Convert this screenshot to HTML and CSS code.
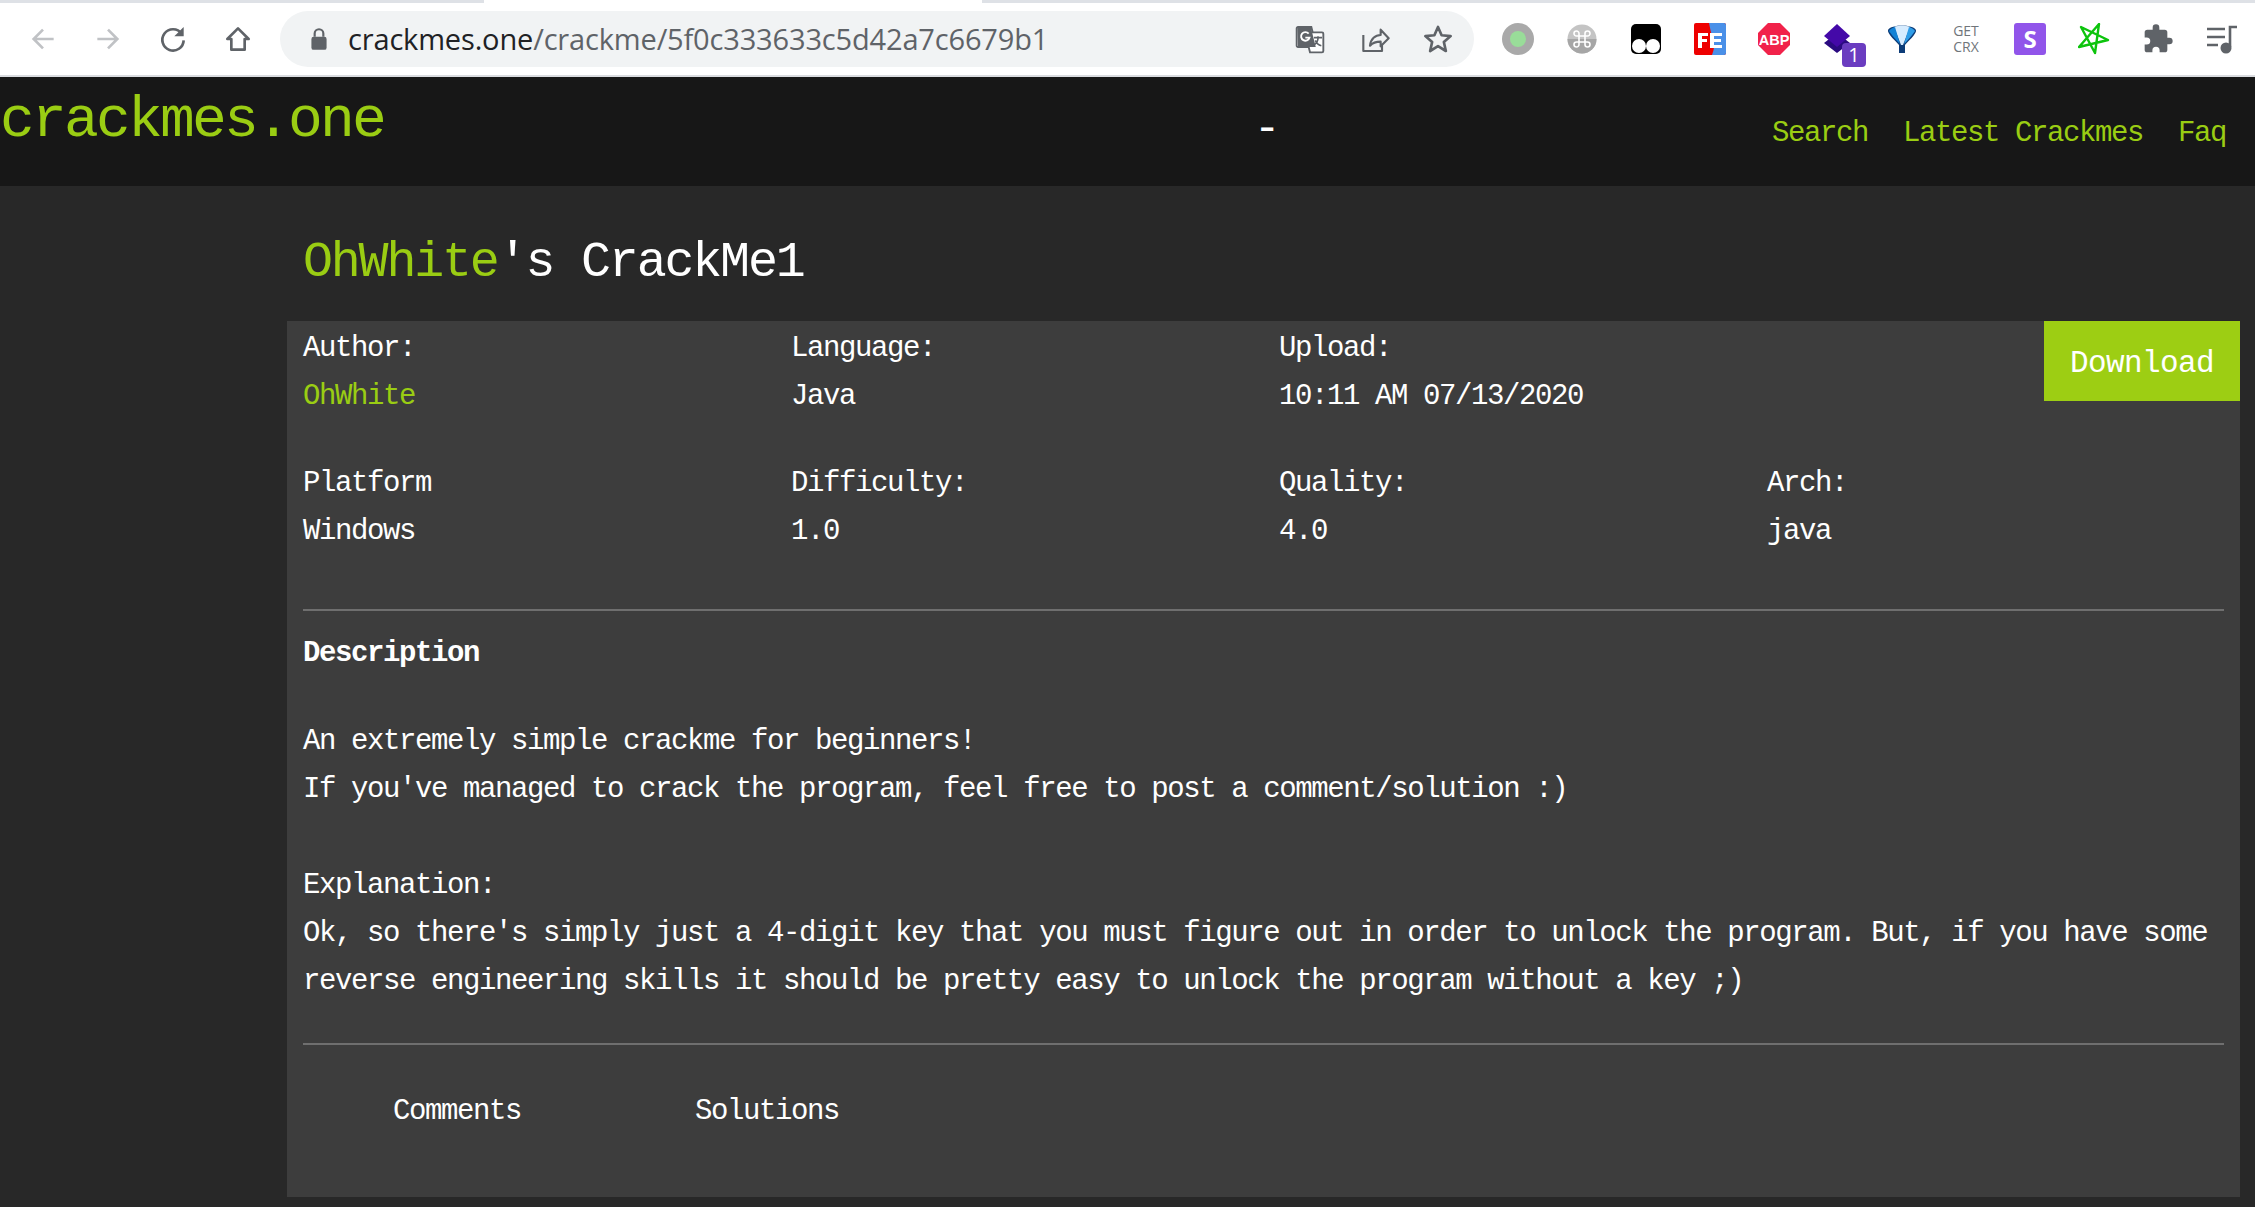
FILE: index.html
```html
<!DOCTYPE html>
<html lang="en">
<head>
    <meta charset="UTF-8">
    <title>OhWhite's CrackMe1</title>
    <link rel="stylesheet" href="styles.css">
</head>
<body>
<div class="tabstrip"><div class="tab-active"></div></div>
<div class="toolbar">
    <div class="nav-buttons">
        <svg class="tb-icon" viewBox="0 0 24 24"><path d="M20 12H5M12 5l-7 7 7 7" fill="none" stroke="#c0c2c5" stroke-width="2"/></svg>
        <svg class="tb-icon" viewBox="0 0 24 24"><path d="M4 12h15M12 5l7 7-7 7" fill="none" stroke="#c0c2c5" stroke-width="2"/></svg>
        <svg class="tb-icon" viewBox="0 0 24 24"><path d="M18.500 8A8 8 0 1 0 20 13" fill="none" stroke="#5f6368" stroke-width="2"/><path d="M20 3v7h-7z" fill="#5f6368"/></svg>
        <svg class="tb-icon" viewBox="0 0 24 24"><path d="M12 4l8 8h-3v8H7v-8H4z" fill="none" stroke="#5f6368" stroke-width="2" stroke-linejoin="round"/></svg>
    </div>
    <div class="omnibox">
        <svg class="lock" viewBox="0 0 24 24"><path d="M8 10V7a4 4 0 0 1 8 0v3" fill="none" stroke="#5f6368" stroke-width="2"/><rect x="5" y="10" width="14" height="12" rx="2" fill="#5f6368"/></svg>
        <div class="url"><span class="url-host">crackmes.one</span>/crackme/5f0c333633c5d42a7c6679b1</div>
        <div class="omni-actions">
            <svg class="tb-icon" viewBox="0 0 24 24"><path d="M3 3h10l1 4h7a1 1 0 0 1 1 1v13a1 1 0 0 1-1 1H12l-1-4H3a1 1 0 0 1-1-1V4a1 1 0 0 1 1-1z" fill="#fff" stroke="#5f6368" stroke-width="1.400"/><path d="M2.500 3.500h10.200l3.600 14.500H3z" fill="#5f6368"/><path d="M11 8a3.200 3.200 0 1 0 .6 3H8.500" fill="none" stroke="#fff" stroke-width="1.400"/><path d="M15 11h6M18 10v1.500c0 2.500-1.500 4-3 5M16 13c.8 2 2.500 3.500 4.500 4" fill="none" stroke="#5f6368" stroke-width="1.200"/></svg>
            <svg class="tb-icon" viewBox="0 0 24 24"><path d="M4 9v12h14v-5M9 17c.5-5 4-8 8-8V5l6 6.500-6 6V14c-3.500 0-6 .8-8 3z" fill="none" stroke="#5f6368" stroke-width="1.600" stroke-linejoin="round"/></svg>
            <svg class="tb-icon" viewBox="0 0 24 24"><path d="M12 3l2.700 6.200 6.800.6-5.100 4.500 1.500 6.700L12 17.400 6.100 21l1.500-6.700L2.500 9.800l6.800-.6z" fill="none" stroke="#5f6368" stroke-width="2" stroke-linejoin="round"/></svg>
        </div>
    </div>
    <div class="extensions">
        <svg class="ext" viewBox="0 0 32 32"><circle cx="16" cy="16" r="16" fill="#a9a9a9"/><circle cx="16" cy="16" r="8" fill="#99dd99"/></svg>
        <svg class="ext" viewBox="0 0 32 32"><circle cx="16" cy="16" r="14.500" fill="#c4c4c4"/><path d="M1.500 16h29A14.500 14.500 0 0 1 1.500 16z" fill="#a6a6a6"/><path d="M13 13h6v6h-6zM13 13h-2.500a2.500 2.500 0 1 1 2.500-2.500zM19 13v-2.500a2.500 2.500 0 1 1 2.500 2.500zM13 19v2.500a2.500 2.500 0 1 1-2.500-2.500zM19 19h2.500a2.500 2.500 0 1 1-2.500 2.500z" fill="none" stroke="#fff" stroke-width="1.600"/></svg>
        <svg class="ext" viewBox="0 0 32 32"><rect x="1" y="1" width="30" height="30" rx="5" fill="#000"/><circle cx="9" cy="23" r="7" fill="#fff"/><circle cx="23" cy="23" r="7" fill="#fff"/></svg>
        <svg class="ext" viewBox="0 0 32 32"><rect width="32" height="32" rx="2" fill="#ee0000"/><path d="M15 0h15a2 2 0 0 1 2 2v28a2 2 0 0 1-2 2H18c2-5 3-10 1-16s-3-11-4-16z" fill="#4a90e8"/><path d="M4 10h10v3H8v3h5v3H8v6H4zM16 10h12v3h-8v3h7v3h-7v3h8v3H16z" fill="#fff"/></svg>
        <svg class="ext" viewBox="0 0 32 32"><path d="M10 0h12l10 10v12L22 32H10L0 22V10z" fill="#f1224a"/><text class="abp-label" x="16" y="21.500">ABP</text></svg>
        <div class="ext-badge-wrap">
            <svg class="ext" viewBox="0 0 32 32"><path d="M2 20l13-10 13 10-13 10z" fill="#2a0a80"/><path d="M2 13L15 1l13 12-13 11z" fill="#4409a8"/></svg>
            <div class="badge">1</div>
        </div>
        <svg class="ext" viewBox="0 0 32 32"><path d="M2 7c3-6 25-6 28 0 1 4-9 12-11 15v8h-6v-8C11 19 1 11 2 7z" fill="#0d3c78"/><path d="M8 4c5-2 11-2 16 0l-7 18h-2z" fill="#d6ecff"/><path d="M3 8c2 3 7 9 11 13L9 4C6 5 4 6 3 8z" fill="#1282d6"/><path d="M29 8c-2 3-7 9-11 13l5-17c3 1 5 2 6 4z" fill="#2f9de8"/></svg>
        <div class="ext getcrx">GET<br>CRX</div>
        <svg class="ext" viewBox="0 0 32 32"><rect width="32" height="32" rx="3" fill="#9155ea"/><text class="s-label" x="16" y="24.500">S</text></svg>
        <svg class="ext" viewBox="0 0 32 32"><path d="M21 1L17 30 3 4 30 17 1 24z" fill="none" stroke="#0dc40d" stroke-width="2.400" stroke-linejoin="round"/></svg>
        <svg class="ext" viewBox="0 0 24 24"><path d="M20.500 11H19V7a2 2 0 0 0-2-2h-4V3.500a2.500 2.500 0 0 0-5 0V5H4a2 2 0 0 0-2 2v3.800h1.500a2.700 2.700 0 0 1 0 5.400H2V20a2 2 0 0 0 2 2h3.800v-1.500a2.700 2.700 0 0 1 5.400 0V22H17a2 2 0 0 0 2-2v-4h1.500a2.500 2.500 0 0 0 0-5z" fill="#5f6368"/></svg>
        <svg class="ext" viewBox="0 0 32 32"><path d="M1 6h18M1 14h18M1 22h11" stroke="#5f6368" stroke-width="2.600" fill="none"/><path d="M24 24V4h7" stroke="#5f6368" stroke-width="2.600" fill="none"/><circle cx="20" cy="25" r="5.500" fill="#5f6368"/></svg>
    </div>
</div>

<nav class="site-nav">
    <a class="logo" href="#">crackmes.one</a>
    <div class="nav-dash">-</div>
    <div class="nav-links">
        <a href="#">Search</a>
        <a href="#">Latest Crackmes</a>
        <a href="#">Faq</a>
    </div>
</nav>

<main class="content">
    <h1 class="title"><a href="#">OhWhite</a>'s CrackMe1</h1>
    <section class="panel">
        <a class="download" href="#">Download</a>
        <div class="info-row">
            <div><div>Author:</div><div><a href="#">OhWhite</a></div></div>
            <div><div>Language:</div><div>Java</div></div>
            <div><div>Upload:</div><div>10:11 AM 07/13/2020</div></div>
        </div>
        <div class="info-row info-row-second">
            <div><div>Platform</div><div>Windows</div></div>
            <div><div>Difficulty:</div><div>1.0</div></div>
            <div><div>Quality:</div><div>4.0</div></div>
            <div><div>Arch:</div><div>java</div></div>
        </div>
        <hr class="rule rule-top">
        <h2 class="desc-title">Description</h2>
        <p class="desc">An extremely simple crackme for beginners!<br>
If you've managed to crack the program, feel free to post a comment/solution :)<br>
<br>
Explanation:<br>
Ok, so there's simply just a 4-digit key that you must figure out in order to unlock the program. But, if you have some<br>
reverse engineering skills it should be pretty easy to unlock the program without a key ;)</p>
        <hr class="rule rule-bottom">
        <div class="tabs">
            <a href="#">Comments</a>
            <a href="#">Solutions</a>
        </div>
    </section>
</main>
</body>
</html>
```

FILE: styles.css
```css
html, body { margin: 0; padding: 0; }
body { background: #282828; color: #fff; font-family: "Liberation Mono", monospace; font-size: 29px; line-height: 48px; letter-spacing: -1.4px; overflow: hidden; height: 1207px; }
a { color: #9acd13; text-decoration: none; }

/* browser chrome */
.tabstrip { height: 3px; background: #dee1e6; }
.tab-active { width: 498px; height: 3px; margin-left: 484px; background: #fff; }
.toolbar { height: 72px; background: #fff; border-bottom: 2px solid #dadce0; display: flex; align-items: center; font-family: "Open Sans", sans-serif; letter-spacing: 0; }
.nav-buttons { display: flex; width: 280px; padding-left: 27px; gap: 33px; box-sizing: border-box; flex-shrink: 0; }
.tb-icon { width: 32px; height: 32px; display: block; }
.omnibox { width: 1194px; height: 56px; background: #f1f3f4; border-radius: 28px; display: flex; align-items: center; flex-shrink: 0; box-sizing: border-box; padding-left: 26px; }
.lock { width: 26px; height: 26px; flex-shrink: 0; }
.url { font-size: 29px; line-height: 56px; color: #5f6368; margin-left: 16px; flex: 1; letter-spacing: -0.16px; white-space: nowrap; }
.url-host { color: #202124; }
.omni-actions { display: flex; gap: 32px; padding-right: 20px; }
.extensions { display: flex; align-items: center; gap: 32px; padding-left: 28px; }
.ext { width: 32px; height: 32px; display: block; flex-shrink: 0; }
.abp-label { font: bold 14.5px "Liberation Sans", sans-serif; fill: #fff; text-anchor: middle; }
.s-label { font: bold 24px "Open Sans", sans-serif; fill: #fff; text-anchor: middle; }
.ext-badge-wrap { position: relative; width: 32px; height: 32px; }
.badge { position: absolute; left: 20px; top: 20px; width: 24px; height: 24px; background: #6a3cc0; border-radius: 4px; color: #fff; font-size: 20px; line-height: 24px; text-align: center; }
.getcrx { font-size: 14px; line-height: 16px; color: #70757a; text-align: center; font-family: "Open Sans", sans-serif; }

/* site header */
.site-nav { height: 109px; background: #171717; display: flex; }
.logo { font-size: 58px; line-height: 87px; width: 1254px; flex-shrink: 0; letter-spacing: -2.800px; }
.nav-dash { width: 518px; flex-shrink: 0; font-size: 44px; line-height: 48px; margin-top: 28px; }
.nav-links { display: flex; gap: 35px; line-height: 48px; margin-top: 33px; }

/* page content */
.content { padding: 0 15px 0 287px; }
.title { font-size: 50px; line-height: 154px; height: 135px; margin: 0; padding-left: 16px; font-weight: normal; letter-spacing: -2.200px; }
.panel { background: #3d3d3d; position: relative; height: 876px; padding: 4px 16px 0; box-sizing: border-box; }
.download { position: absolute; top: 0; right: 0; width: 196px; height: 80px; background: #9dce13; color: #fff; line-height: 86px; text-align: center; font-size: 31px; letter-spacing: -0.600px; }
.info-row { display: grid; grid-template-columns: repeat(4, 488px); }
.info-row-second { margin-top: 39px; }
.rule { border: 0; height: 2px; background: #6f6f6f; margin: 0; }
.rule-top { margin-top: 53px; }
.rule-bottom { margin-top: 37px; }
.desc-title { font-size: 29px; line-height: 48px; margin: 19px 0 0; font-weight: bold; }
.desc { margin: 40px 0 0; white-space: nowrap; }
.tabs { display: flex; margin-top: 43px; padding-left: 90px; gap: 174px; }
.tabs a { color: #fff; }
```
